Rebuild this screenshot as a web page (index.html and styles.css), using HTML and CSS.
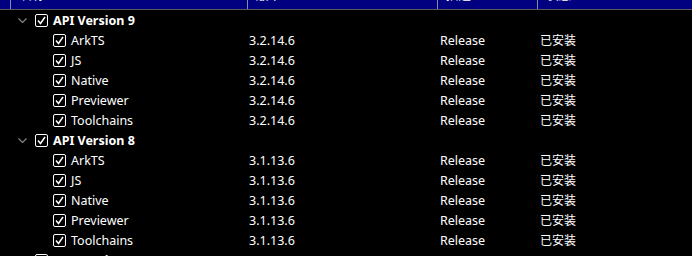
FILE: index.html
```html
<!DOCTYPE html>
<html lang="zh">
<head>
<meta charset="utf-8">
<link rel="stylesheet" href="styles.css">
</head>
<body>
<div class="table">
  <div class="header">
    <div class="hcell first">名称</div>
    <div class="hcell">版本</div>
    <div class="hcell">描述</div>
    <div class="hcell">状态</div>
  </div>

  <div class="row group">
    <div class="cell name"><svg class="chev" width="9" height="6" viewBox="0 0 9 6"><polyline points="0.5,0.5 4.5,4.5 8.5,0.5" fill="none" stroke="#8a8a8a" stroke-width="1.1"/></svg><span class="cb"><svg width="11" height="11" viewBox="0 0 11 11"><polyline points="2,5.5 4.5,8.5 9,2" fill="none" stroke="#fff" stroke-width="1.5"/></svg></span><span class="label">API Version 9</span></div>
    <div class="cell"></div><div class="cell"></div><div class="cell"></div>
  </div>
  <div class="row child"><div class="cell name"><span class="cb"><svg width="11" height="11" viewBox="0 0 11 11"><polyline points="2,5.5 4.5,8.5 9,2" fill="none" stroke="#fff" stroke-width="1.5"/></svg></span><span class="label">ArkTS</span></div><div class="cell ver">3.2.14.6</div><div class="cell rel">Release</div><div class="cell st">已安装</div></div>
  <div class="row child"><div class="cell name"><span class="cb"><svg width="11" height="11" viewBox="0 0 11 11"><polyline points="2,5.5 4.5,8.5 9,2" fill="none" stroke="#fff" stroke-width="1.5"/></svg></span><span class="label">JS</span></div><div class="cell ver">3.2.14.6</div><div class="cell rel">Release</div><div class="cell st">已安装</div></div>
  <div class="row child"><div class="cell name"><span class="cb"><svg width="11" height="11" viewBox="0 0 11 11"><polyline points="2,5.5 4.5,8.5 9,2" fill="none" stroke="#fff" stroke-width="1.5"/></svg></span><span class="label">Native</span></div><div class="cell ver">3.2.14.6</div><div class="cell rel">Release</div><div class="cell st">已安装</div></div>
  <div class="row child"><div class="cell name"><span class="cb"><svg width="11" height="11" viewBox="0 0 11 11"><polyline points="2,5.5 4.5,8.5 9,2" fill="none" stroke="#fff" stroke-width="1.5"/></svg></span><span class="label">Previewer</span></div><div class="cell ver">3.2.14.6</div><div class="cell rel">Release</div><div class="cell st">已安装</div></div>
  <div class="row child"><div class="cell name"><span class="cb"><svg width="11" height="11" viewBox="0 0 11 11"><polyline points="2,5.5 4.5,8.5 9,2" fill="none" stroke="#fff" stroke-width="1.5"/></svg></span><span class="label">Toolchains</span></div><div class="cell ver">3.2.14.6</div><div class="cell rel">Release</div><div class="cell st">已安装</div></div>

  <div class="row group">
    <div class="cell name"><svg class="chev" width="9" height="6" viewBox="0 0 9 6"><polyline points="0.5,0.5 4.5,4.5 8.5,0.5" fill="none" stroke="#8a8a8a" stroke-width="1.1"/></svg><span class="cb"><svg width="11" height="11" viewBox="0 0 11 11"><polyline points="2,5.5 4.5,8.5 9,2" fill="none" stroke="#fff" stroke-width="1.5"/></svg></span><span class="label">API Version 8</span></div>
    <div class="cell"></div><div class="cell"></div><div class="cell"></div>
  </div>
  <div class="row child"><div class="cell name"><span class="cb"><svg width="11" height="11" viewBox="0 0 11 11"><polyline points="2,5.5 4.5,8.5 9,2" fill="none" stroke="#fff" stroke-width="1.5"/></svg></span><span class="label">ArkTS</span></div><div class="cell ver">3.1.13.6</div><div class="cell rel">Release</div><div class="cell st">已安装</div></div>
  <div class="row child"><div class="cell name"><span class="cb"><svg width="11" height="11" viewBox="0 0 11 11"><polyline points="2,5.5 4.5,8.5 9,2" fill="none" stroke="#fff" stroke-width="1.5"/></svg></span><span class="label">JS</span></div><div class="cell ver">3.1.13.6</div><div class="cell rel">Release</div><div class="cell st">已安装</div></div>
  <div class="row child"><div class="cell name"><span class="cb"><svg width="11" height="11" viewBox="0 0 11 11"><polyline points="2,5.5 4.5,8.5 9,2" fill="none" stroke="#fff" stroke-width="1.5"/></svg></span><span class="label">Native</span></div><div class="cell ver">3.1.13.6</div><div class="cell rel">Release</div><div class="cell st">已安装</div></div>
  <div class="row child"><div class="cell name"><span class="cb"><svg width="11" height="11" viewBox="0 0 11 11"><polyline points="2,5.5 4.5,8.5 9,2" fill="none" stroke="#fff" stroke-width="1.5"/></svg></span><span class="label">Previewer</span></div><div class="cell ver">3.1.13.6</div><div class="cell rel">Release</div><div class="cell st">已安装</div></div>
  <div class="row child"><div class="cell name"><span class="cb"><svg width="11" height="11" viewBox="0 0 11 11"><polyline points="2,5.5 4.5,8.5 9,2" fill="none" stroke="#fff" stroke-width="1.5"/></svg></span><span class="label">Toolchains</span></div><div class="cell ver">3.1.13.6</div><div class="cell rel">Release</div><div class="cell st">已安装</div></div>

  <div class="row group">
    <div class="cell name"><svg class="chev" width="9" height="6" viewBox="0 0 9 6"><polyline points="0.5,0.5 4.5,4.5 8.5,0.5" fill="none" stroke="#8a8a8a" stroke-width="1.1"/></svg><span class="cb empty"></span><span class="label">API Version 7</span></div>
    <div class="cell"></div><div class="cell"></div><div class="cell"></div>
  </div>
</div>
</body>
</html>
```

FILE: styles.css
```css
html, body {
  margin: 0;
  padding: 0;
  background: #000;
  width: 692px;
  height: 256px;
  overflow: hidden;
}
body {
  font-family: "Noto Sans", "Noto Sans CJK SC", sans-serif;
  font-size: 12.5px;
  color: #fff;
}
.table {
  display: flex;
  flex-direction: column;
}
.header {
  display: grid;
  grid-template-columns: 247px 190px 100px 1fr;
  height: 26px;
  margin-top: -17px;
  background: #000080;
  border-bottom: 1px solid #5a5a5a;
  color: #fff;
}
.hcell {
  display: flex;
  align-items: center;
  padding-left: 8px;
  border-left: 1px solid #8a8aa8;
  line-height: 1;
}
.hcell.first {
  margin-left: 10px;
  padding-left: 9px;
}
.row {
  display: grid;
  grid-template-columns: 247px 190px 100px 1fr;
  height: 20px;
}
.cell {
  display: flex;
  align-items: center;
  white-space: nowrap;
  line-height: 1;
  padding-top: 2px;
  box-sizing: border-box;
}
.ver { padding-left: 2px; }
.rel { padding-left: 3px; }
.st { padding-left: 3px; font-size: 12px; }
.group .name { padding-left: 18px; }
.child .name { padding-left: 53px; }
.chev {
  display: block;
  margin-right: 8px;
  margin-top: -1px;
}
.cb {
  box-sizing: border-box;
  width: 13px;
  height: 13px;
  border: 1px solid #fff;
  border-radius: 2px;
  display: flex;
  align-items: center;
  justify-content: center;
  margin-right: 5px;
  margin-top: -1px;
  flex: none;
}
.cb svg { display: block; }
.group .label { font-weight: bold; }
```
